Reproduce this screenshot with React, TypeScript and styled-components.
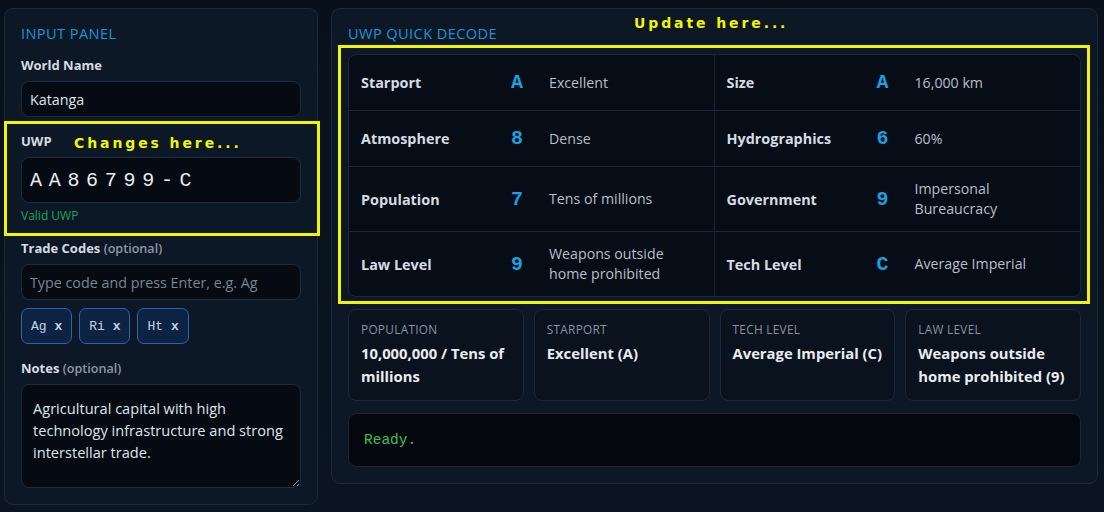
import styled, { createGlobalStyle } from "styled-components";

interface DecodeItem {
  label: string;
  code: string;
  meaning: string;
}

interface SummaryItem {
  title: string;
  value: string;
}

const decodeRows: DecodeItem[][] = [
  [
    { label: "Starport", code: "A", meaning: "Excellent" },
    { label: "Size", code: "A", meaning: "16,000 km" },
  ],
  [
    { label: "Atmosphere", code: "8", meaning: "Dense" },
    { label: "Hydrographics", code: "6", meaning: "60%" },
  ],
  [
    { label: "Population", code: "7", meaning: "Tens of millions" },
    { label: "Government", code: "9", meaning: "Impersonal Bureaucracy" },
  ],
  [
    { label: "Law Level", code: "9", meaning: "Weapons outside home prohibited" },
    { label: "Tech Level", code: "C", meaning: "Average Imperial" },
  ],
];

const summary: SummaryItem[] = [
  { title: "Population", value: "10,000,000 / Tens of millions" },
  { title: "Starport", value: "Excellent (A)" },
  { title: "Tech Level", value: "Average Imperial (C)" },
  { title: "Law Level", value: "Weapons outside home prohibited (9)" },
];

const tradeCodes = ["Ag", "Ri", "Ht"];

export default function App() {
  return (
    <>
      <GlobalStyle />
      <Page>
        <InputPanel>
          <PanelTitle>Input Panel</PanelTitle>

          <Field>
            <Label>World Name</Label>
            <TextInput defaultValue="Katanga" />
          </Field>

          <Field>
            <Label>UWP</Label>
            <UwpInput defaultValue="AA86799-C" spellCheck={false} />
            <Valid>Valid UWP</Valid>
            <Highlight $inset="-12px -19px -12px -17px">
              <Callout $top="10px" $left="67px">
                Changes here...
              </Callout>
            </Highlight>
          </Field>

          <Field>
            <Label>
              Trade Codes <Optional>(optional)</Optional>
            </Label>
            <TextInput placeholder="Type code and press Enter, e.g. Ag" />
            <Tags>
              {tradeCodes.map((code) => (
                <Tag key={code}>
                  {code} <b>x</b>
                </Tag>
              ))}
            </Tags>
          </Field>

          <Field>
            <Label>
              Notes <Optional>(optional)</Optional>
            </Label>
            <Notes defaultValue="Agricultural capital with high technology infrastructure and strong interstellar trade." />
          </Field>
        </InputPanel>

        <DecodePanel>
          <PanelTitle>UWP Quick Decode</PanelTitle>

          <DecodeWrap>
            <DecodeGrid>
              {decodeRows.map((row, r) =>
                row.map((item, c) => (
                  <DecodeCell
                    key={item.label}
                    $right={c === 0}
                    $last={r === decodeRows.length - 1}
                  >
                    <CellLabel>{item.label}</CellLabel>
                    <CellCode>{item.code}</CellCode>
                    <CellMeaning>{item.meaning}</CellMeaning>
                  </DecodeCell>
                ))
              )}
            </DecodeGrid>
            <Highlight $inset="-9px -9px -7px -10px">
              <Callout $top="-34px" $left="293px">
                Update here...
              </Callout>
            </Highlight>
          </DecodeWrap>

          <SummaryRow>
            {summary.map((s) => (
              <SummaryCard key={s.title}>
                <SummaryTitle>{s.title}</SummaryTitle>
                <SummaryValue>{s.value}</SummaryValue>
              </SummaryCard>
            ))}
          </SummaryRow>

          <Status>Ready.</Status>
        </DecodePanel>
      </Page>
    </>
  );
}

const GlobalStyle = createGlobalStyle`
  * {
    box-sizing: border-box;
  }

  html,
  body {
    margin: 0;
    padding: 0;
    background: #09121d;
  }

  body {
    font-family: "Open Sans", "Noto Sans", sans-serif;
    color: #dfe4ea;
  }
`;

const Page = styled.div`
  position: relative;
  width: 1104px;
  height: 512px;
  padding: 8px 0 0 4px;
  display: grid;
  grid-template-columns: 314px 767px;
  column-gap: 13px;
  align-items: start;
  background: linear-gradient(180deg, #08111b 0%, #0a1521 100%);
  overflow: hidden;
`;

const Panel = styled.section`
  background: #0d1826;
  border: 1px solid #1c2939;
  border-radius: 9px;
  padding: 16px;
`;

const InputPanel = styled(Panel)`
  display: flex;
  flex-direction: column;
`;

const DecodePanel = styled(Panel)`
  display: flex;
  flex-direction: column;
  gap: 12px;
`;

const PanelTitle = styled.h2`
  margin: 0;
  font-size: 14.6px;
  line-height: 16px;
  font-weight: 400;
  letter-spacing: 0.4px;
  text-transform: uppercase;
  color: #1d95d4;
`;

const Field = styled.div`
  position: relative;
  display: flex;
  flex-direction: column;
  margin-top: 16px;
`;

const Label = styled.label`
  font-size: 13px;
  line-height: 17px;
  font-weight: 700;
  color: #d6dce3;
  margin-bottom: 7px;
`;

const Optional = styled.span`
  font-size: 12.6px;
  font-weight: 600;
  color: #8d97a4;
`;

const TextInput = styled.input`
  height: 36px;
  width: 100%;
  padding: 0 8px;
  background: #060b13;
  border: 1px solid #1f2c3c;
  border-radius: 8px;
  font-family: inherit;
  font-size: 14.3px;
  color: #dfe4ea;
  outline: none;

  &::placeholder {
    color: #7a8492;
  }
`;

const UwpInput = styled(TextInput)`
  height: 46px;
  font-family: "Liberation Mono", "DejaVu Sans Mono", monospace;
  font-size: 20px;
  letter-spacing: 6.7px;
  color: #e8ebef;
`;

const Valid = styled.div`
  margin-top: 5px;
  font-size: 12px;
  line-height: 16px;
  color: #1fa35a;
`;

const Tags = styled.div`
  display: flex;
  gap: 7px;
  margin-top: 8px;
`;

const Tag = styled.span`
  height: 36px;
  display: inline-flex;
  align-items: center;
  padding: 0 9px;
  background: #0c2344;
  border: 1px solid #3063a6;
  border-radius: 7px;
  font-family: "Liberation Mono", "DejaVu Sans Mono", monospace;
  font-size: 13px;
  color: #c7d3e0;
  white-space: pre;
`;

const Notes = styled.textarea`
  height: 104px;
  padding: 12px 11px;
  background: #060b13;
  border: 1px solid #1f2c3c;
  border-radius: 8px;
  font-family: inherit;
  font-size: 14.6px;
  line-height: 22px;
  color: #dfe4ea;
  outline: none;
  resize: vertical;
`;

const Highlight = styled.div<{ $inset: string }>`
  position: absolute;
  inset: ${({ $inset }) => $inset};
  border: 3px solid #f2f500;
  pointer-events: none;
`;

const Callout = styled.span<{ $top: string; $left: string }>`
  position: absolute;
  top: ${({ $top }) => $top};
  left: ${({ $left }) => $left};
  font-family: "DejaVu Sans", sans-serif;
  font-size: 14px;
  line-height: 18px;
  font-weight: 700;
  letter-spacing: 2.9px;
  color: #f2f500;
  white-space: nowrap;
`;

const DecodeWrap = styled.div`
  position: relative;
  margin-top: 1px;
`;

const DecodeGrid = styled.div`
  display: grid;
  grid-template-columns: 1fr 1fr;
  background: #070d17;
  border: 1px solid #1c2838;
  border-radius: 8px;
  overflow: hidden;
`;

const DecodeCell = styled.div<{ $right: boolean; $last: boolean }>`
  display: grid;
  grid-template-columns: 128px 56px 1fr;
  align-items: center;
  padding: 12px;
  border-right: ${({ $right }) => ($right ? "1px solid #1c2838" : "none")};
  border-bottom: ${({ $last }) => ($last ? "none" : "1px solid #1c2838")};
`;

const CellLabel = styled.div`
  font-size: 14.4px;
  font-weight: 700;
  color: #d6dce3;
`;

const CellCode = styled.div`
  font-family: "Liberation Mono", "DejaVu Sans Mono", monospace;
  font-size: 20px;
  line-height: 31px;
  font-weight: 700;
  text-align: center;
  color: #1b9fe0;
`;

const CellMeaning = styled.div`
  padding-left: 4px;
  font-size: 14.2px;
  line-height: 20px;
  color: #b7bfc9;
`;

const SummaryRow = styled.div`
  display: grid;
  grid-template-columns: repeat(4, 1fr);
  gap: 10px;
`;

const SummaryCard = styled.div`
  padding: 12px;
  background: #0a121e;
  border: 1px solid #1c2838;
  border-radius: 8px;
`;

const SummaryTitle = styled.div`
  font-size: 11.8px;
  line-height: 14px;
  letter-spacing: 0.3px;
  text-transform: uppercase;
  color: #8a94a1;
`;

const SummaryValue = styled.div`
  margin-top: 6px;
  font-size: 14.8px;
  line-height: 23px;
  font-weight: 700;
  color: #e9edf1;
`;

const Status = styled.div`
  height: 54px;
  display: flex;
  align-items: center;
  padding: 0 15px;
  background: #04080e;
  border: 1px solid #1a2636;
  border-radius: 8px;
  font-family: "Liberation Mono", "DejaVu Sans Mono", monospace;
  font-size: 14.5px;
  color: #3bc15a;
`;
